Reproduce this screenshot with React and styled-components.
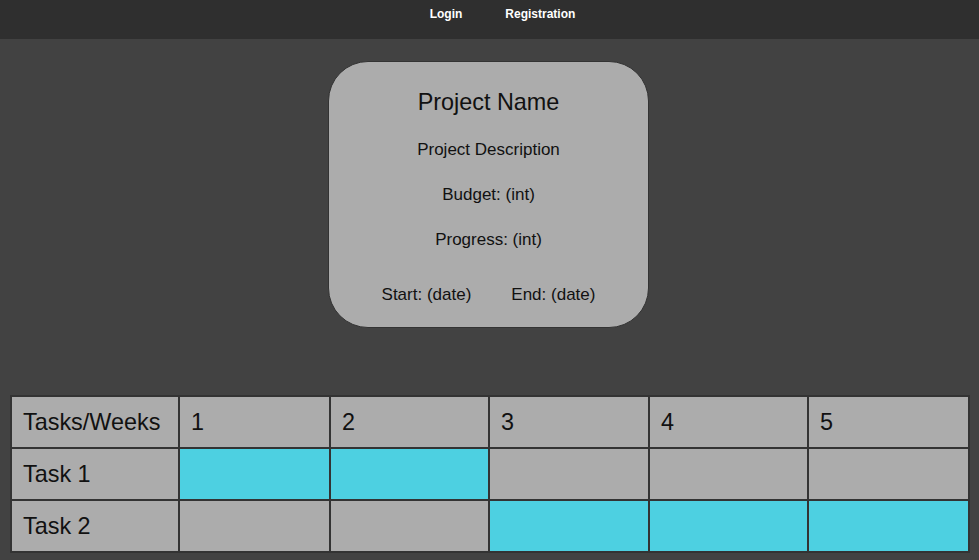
import React from 'react';
import styled, { createGlobalStyle } from 'styled-components';

// Estilos globais da página.
const GlobalStyle = createGlobalStyle`
    body {
        margin: 0;
        background-color: #424242;
        font-family: "Liberation Sans", Arial, sans-serif;
        color: #111;
    }
`;

const Page = styled.div`
    min-height: 560px;
    display: flex;
    flex-direction: column;
`;

// Barra de navegação no topo.
const NavBar = styled.nav`
    height: 39px;
    background-color: #2f2f2f;
    display: flex;
    justify-content: center;
    align-items: flex-start;
    gap: 43px;
    padding-left: 26px;
`;

const NavLink = styled.a`
    color: #fff;
    font-size: 12px;
    font-weight: bold;
    line-height: 14px;
    margin-top: 7px;
    text-decoration: none;
    cursor: pointer;
`;

// Cartão com os dados do projeto.
const Card = styled.section`
    align-self: center;
    width: 319px;
    height: 265px;
    margin: 22px 2px 0 0;
    background-color: #acacac;
    border: 1px solid #333;
    border-radius: 40px;
    box-sizing: content-box;
    display: flex;
    flex-direction: column;
    align-items: center;
`;

const Title = styled.h2`
    margin: 27px 0 0;
    font-size: 23.4px;
    font-weight: normal;
    line-height: 26px;
`;

const Info = styled.p`
    margin: ${(props) => props.$top}px 0 0;
    font-size: 17px;
    line-height: 18px;
`;

const Dates = styled.div`
    display: flex;
    gap: 40px;
    margin-top: 37px;
    font-size: 17px;
    line-height: 18px;
`;

// Tabela de tarefas por semana.
const Table = styled.table`
    margin: 67px 10px 0;
    width: 958px;
    border-collapse: collapse;
    table-layout: fixed;
`;

const Cell = styled.td`
    height: 52px;
    padding: 0 0 0 11px;
    border: 2px solid #333;
    background-color: ${(props) => (props.$active ? '#4dd0e1' : '#acacac')};
    font-size: 23.4px;
    text-align: left;
    vertical-align: middle;
    box-sizing: border-box;
`;

const widths = [168, 151, 159, 160, 159, 161];

const tasks = [
    { name: 'Task 1', weeks: [1, 2] },
    { name: 'Task 2', weeks: [3, 4, 5] },
];

function App() {
    return (
        <Page>
            <GlobalStyle />
            <NavBar>
                <NavLink>Login</NavLink>
                <NavLink>Registration</NavLink>
            </NavBar>
            <Card>
                <Title>Project Name</Title>
                <Info $top={26}>Project Description</Info>
                <Info $top={27}>Budget: (int)</Info>
                <Info $top={27}>Progress: (int)</Info>
                <Dates>
                    <span>Start: (date)</span>
                    <span>End: (date)</span>
                </Dates>
            </Card>
            <Table>
                <colgroup>
                    {widths.map((w, i) => (
                        <col key={i} style={{ width: w }} />
                    ))}
                </colgroup>
                <tbody>
                    <tr>
                        <Cell>Tasks/Weeks</Cell>
                        {[1, 2, 3, 4, 5].map((n) => (
                            <Cell key={n}>{n}</Cell>
                        ))}
                    </tr>
                    {tasks.map((t) => (
                        <tr key={t.name}>
                            <Cell>{t.name}</Cell>
                            {[1, 2, 3, 4, 5].map((n) => (
                                <Cell key={n} $active={t.weeks.includes(n)} />
                            ))}
                        </tr>
                    ))}
                </tbody>
            </Table>
        </Page>
    );
}

export default App;
